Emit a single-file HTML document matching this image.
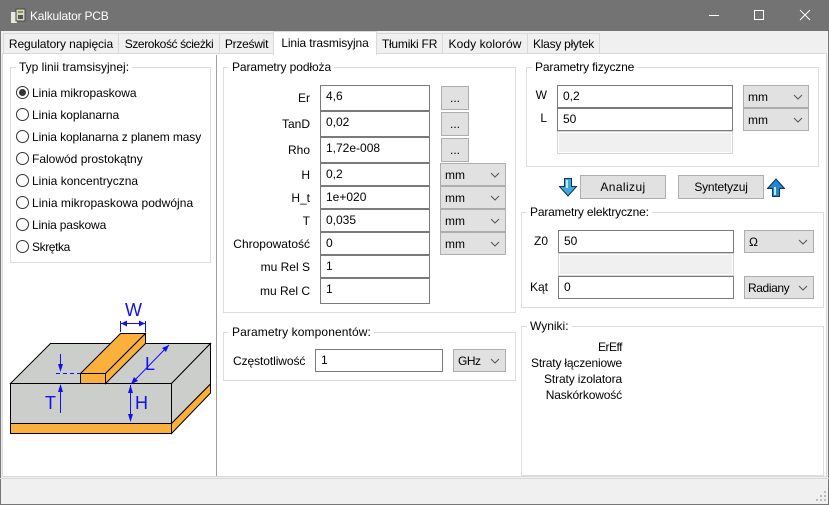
<!DOCTYPE html>
<html><head><meta charset="utf-8"><style>
html,body{margin:0;padding:0}
body{width:829px;height:505px;overflow:hidden;position:relative;background:#fff;font:12px/16px "Liberation Sans",sans-serif;color:#000}
div,span.a{position:absolute;box-sizing:border-box;white-space:nowrap}
.tab{top:33px;height:21px;background:#f0f0f0;border:1px solid #d9d9d9;text-align:center;line-height:21px}
.g{border:1px solid #dcdcdc}
.lg{background:#fff;padding:0 3px;line-height:14px;height:14px}
.i{border:1px solid #7a7a7a;background:#fff;padding-left:5px;line-height:21px}
.d{border:1px solid #d4d4d4;background:#f0f0f0;outline:1px solid #fff;outline-offset:-2px}
.b{background:#e1e1e1;border:1px solid #adadad;text-align:center;line-height:23px}
.s{background:#e1e1e1;border:1px solid #adadad;padding-left:4px;line-height:22px}
.s svg{position:absolute;right:5px;top:8px}
.r{text-align:right;line-height:16px;height:16px}
.c{width:13px;height:13px;border:1px solid #333;border-radius:50%;left:16px;background:#fff}
.t{left:32px;height:16px}
</style></head><body>
<!-- window -->
<div style="left:0;top:0;width:829px;height:505px;background:#f0f0f0;border:1px solid #777;border-top:0"></div>
<div style="left:0;top:0;width:829px;height:31px;background:#737373"></div>
<svg style="position:absolute;left:10px;top:8px" width="16" height="16"><path d="M1 4h6v11H1z" fill="#e8e8e0"/><path d="M6 1h9v12H6z" fill="#d8d8c8" stroke="#444"/><path d="M8 3h5v2H8z" fill="#8a9a40"/><path d="M8 7h5v4H8z" fill="#555"/></svg>
<div style="left:30px;top:8px;color:#fff;line-height:16px;letter-spacing:-.2px">Kalkulator PCB</div>
<svg style="position:absolute;left:700px;top:5px" width="120" height="20"><path d="M9 10.500h10" stroke="#fff" fill="none"/><path d="M54.500 5.500h9v9h-9z" stroke="#fff" fill="none"/><path d="M100 5l10 10M110 5l-10 10" stroke="#fff" fill="none"/></svg>
<!-- pane -->
<div style="left:2px;top:53px;width:825px;height:424px;background:#fff;border:1px solid #d9d9d9"></div>
<div class="tab" style="left:3px;width:116px;letter-spacing:-.1px">Regulatory napięcia</div>
<div class="tab" style="left:118px;width:102px;letter-spacing:-.4px">Szerokość ścieżki</div>
<div class="tab" style="left:219px;width:55px;letter-spacing:-.25px">Prześwit</div>
<div class="tab" style="left:376px;width:67px;letter-spacing:-.2px">Tłumiki FR</div>
<div class="tab" style="left:442px;width:86px;letter-spacing:.08px">Kody kolorów</div>
<div class="tab" style="left:527px;width:73px;letter-spacing:-.25px">Klasy płytek</div>
<div class="tab" style="left:273px;top:31px;width:104px;height:24px;background:#fff;border-bottom:0;line-height:22px;letter-spacing:-.12px">Linia trasmisyjna</div>
<div style="left:216px;top:55px;width:1px;height:421px;background:#a0a0a0"></div>
<div style="left:0;top:478px;width:829px;height:27px;border-top:1px solid #d9d9d9"></div>
<svg style="position:absolute;left:816px;top:491px" width="11" height="11" fill="#bbb"><path d="M8 0h2v2H8zM4 4h2v2H4zM8 4h2v2H8zM0 8h2v2H0zM4 8h2v2H4zM8 8h2v2H8z"/></svg>

<!-- Typ linii -->
<div class="g" style="left:10px;top:67px;width:201px;height:196px"></div>
<div class="lg" style="left:16px;top:60px">Typ linii tramsisyjnej:</div>
<div class="c" style="top:86px"></div><div style="left:19px;top:89px;width:7px;height:7px;border-radius:50%;background:#333"></div>
<div class="c" style="top:108px"></div><div class="c" style="top:130px"></div><div class="c" style="top:152px"></div><div class="c" style="top:174px"></div><div class="c" style="top:196px"></div><div class="c" style="top:218px"></div><div class="c" style="top:240px"></div>
<div class="t" style="top:85px;letter-spacing:-.05px">Linia mikropaskowa</div>
<div class="t" style="top:107px;letter-spacing:-.06px">Linia koplanarna</div>
<div class="t" style="top:129px;letter-spacing:-.1px">Linia koplanarna z planem masy</div>
<div class="t" style="top:151px">Falowód prostokątny</div>
<div class="t" style="top:173px">Linia koncentryczna</div>
<div class="t" style="top:195px;letter-spacing:.04px">Linia mikropaskowa podwójna</div>
<div class="t" style="top:217px;letter-spacing:-.15px">Linia paskowa</div>
<div class="t" style="top:239px;letter-spacing:-.4px">Skrętka</div>

<!-- diagram -->
<svg style="position:absolute;left:0;top:270px" width="216" height="205" viewBox="0 270 216 205">
<g stroke="#000" stroke-width="1">
<path d="M10.500 383.500L50.500 343.500H210.500L171.500 383.500Z" fill="#cccecc"/>
<path d="M171.500 383.500L210.500 343.500V384L171.500 423.500Z" fill="#cccecc"/>
<path d="M171.500 423.500L210.500 384V393L171.500 433.500Z" fill="#fbb03b"/>
<path d="M10.500 383.500H171.500V423.500H10.500Z" fill="#cccecc"/>
<path d="M10.500 423.500H171.500V433.500H10.500Z" fill="#fbb03b"/>
<path d="M80.500 373.500L120.500 333.500H145.500L105.500 373.500Z" fill="#fbb03b"/>
<path d="M105.500 373.500L145.500 333.500V343.500L105.500 383.500Z" fill="#fbb03b"/>
<path d="M80.500 373.500H105.500V383.500H80.500Z" fill="#fbb03b"/>
</g>
<g stroke="#1010f0" fill="none">
<path d="M120.500 321v11M145.500 321v11M121 323.500h24" stroke-dasharray="none"/>
<path d="M60.500 354v16M60.500 385v28M130.500 385v36M131 384L169 345" />
<path d="M56 373.500h24" stroke-dasharray="4 3"/>
</g>
<g fill="#1010f0">
<path d="M121 323.500l6-3v6zM145 323.500l-6-3v6zM60.500 372l-2.500-8h5zM60.500 384l-2.500 8h5zM130.500 385l-2.500 8h5zM130.500 422l-2.500-8h5zM131 384l3-7 4 4zM169 345l-3 7-4-4z"/>
<text x="125" y="316" font-family="Liberation Sans" font-size="18">W</text>
<text x="45" y="409" font-family="Liberation Sans" font-size="18">T</text>
<text x="135" y="409" font-family="Liberation Sans" font-size="18">H</text>
<text x="145" y="370" font-family="Liberation Sans" font-size="18">L</text>
</g></svg>

<!-- Parametry podłoża -->
<div class="g" style="left:223px;top:67px;width:293px;height:246px"></div>
<div class="lg" style="left:229px;top:60px;letter-spacing:-.1px">Parametry podłoża</div>
<div class="r" style="left:230px;width:80px;top:90px">Er</div>
<div class="r" style="left:230px;width:80px;top:116px">TanD</div>
<div class="r" style="left:230px;width:80px;top:142px">Rho</div>
<div class="r" style="left:230px;width:80px;top:167px">H</div>
<div class="r" style="left:230px;width:80px;top:190px">H_t</div>
<div class="r" style="left:230px;width:80px;top:213px">T</div>
<div class="r" style="left:230px;width:80px;top:236px">Chropowatość</div>
<div class="r" style="left:230px;width:80px;top:259px">mu Rel S</div>
<div class="r" style="left:230px;width:80px;top:283px">mu Rel C</div>
<div class="i" style="left:320px;top:85px;width:110px;height:26px">4,6</div>
<div class="i" style="left:320px;top:111px;width:110px;height:26px">0,02</div>
<div class="i" style="left:320px;top:137px;width:110px;height:26px">1,72e-008</div>
<div class="i" style="left:320px;top:163px;width:110px;height:23px">0,2</div>
<div class="i" style="left:320px;top:186px;width:110px;height:23px">1e+020</div>
<div class="i" style="left:320px;top:209px;width:110px;height:23px">0,035</div>
<div class="i" style="left:320px;top:232px;width:110px;height:23px">0</div>
<div class="i" style="left:320px;top:255px;width:110px;height:23px">1</div>
<div class="i" style="left:320px;top:278px;width:110px;height:26px">1</div>
<div class="b" style="left:441px;top:86px;width:28px;height:24px">...</div>
<div class="b" style="left:441px;top:112px;width:28px;height:24px">...</div>
<div class="b" style="left:441px;top:138px;width:28px;height:24px">...</div>
<div class="s" style="left:440px;top:163px;width:66px;height:23px">mm<svg width="10" height="6"><path d="M1 1l4 4 4-4" stroke="#555" fill="none"/></svg></div>
<div class="s" style="left:440px;top:186px;width:66px;height:23px">mm<svg width="10" height="6"><path d="M1 1l4 4 4-4" stroke="#555" fill="none"/></svg></div>
<div class="s" style="left:440px;top:209px;width:66px;height:23px">mm<svg width="10" height="6"><path d="M1 1l4 4 4-4" stroke="#555" fill="none"/></svg></div>
<div class="s" style="left:440px;top:232px;width:66px;height:23px">mm<svg width="10" height="6"><path d="M1 1l4 4 4-4" stroke="#555" fill="none"/></svg></div>

<!-- komponenty -->
<div class="g" style="left:223px;top:332px;width:293px;height:49px"></div>
<div class="lg" style="left:229px;top:325px;letter-spacing:.1px">Parametry komponentów:</div>
<div style="left:233px;top:353px;letter-spacing:-.08px">Częstotliwość</div>
<div class="i" style="left:315px;top:349px;width:128px;height:23px">1</div>
<div class="s" style="left:453px;top:349px;width:53px;height:23px;letter-spacing:-.5px">GHz<svg width="10" height="6"><path d="M1 1l4 4 4-4" stroke="#555" fill="none"/></svg></div>

<!-- fizyczne -->
<div class="g" style="left:526px;top:67px;width:293px;height:100px"></div>
<div class="lg" style="left:532px;top:60px;letter-spacing:-.16px">Parametry fizyczne</div>
<div class="r" style="left:526px;width:21px;top:87px">W</div>
<div class="r" style="left:526px;width:21px;top:110px">L</div>
<div class="i" style="left:557px;top:85px;width:176px;height:23px">0,2</div>
<div class="i" style="left:557px;top:108px;width:176px;height:23px">50</div>
<div class="d" style="left:557px;top:131px;width:176px;height:23px"></div>
<div class="s" style="left:743px;top:85px;width:66px;height:23px">mm<svg width="10" height="6"><path d="M1 1l4 4 4-4" stroke="#555" fill="none"/></svg></div>
<div class="s" style="left:743px;top:108px;width:66px;height:23px">mm<svg width="10" height="6"><path d="M1 1l4 4 4-4" stroke="#555" fill="none"/></svg></div>

<!-- buttons -->
<svg style="position:absolute;left:559px;top:178px" width="18" height="19"><path d="M5.500.5h7v8h5L9 18 .5 8.500h5z" fill="#3fa9dc" stroke="#135"/><path d="M7 2h2v8H7z" fill="#bfe8f8"/></svg>
<div class="b" style="left:580px;top:175px;width:86px;height:24px;line-height:22px;letter-spacing:.4px">Analizuj</div>
<div class="b" style="left:678px;top:175px;width:86px;height:24px;line-height:22px;letter-spacing:-.2px">Syntetyzuj</div>
<svg style="position:absolute;left:767px;top:178px" width="18" height="19"><path d="M5.500 18.500h7v-8h5L9 1 .5 10.500h5z" fill="#1e88d0" stroke="#135"/><path d="M7 9h2v8H7z" fill="#bfe8f8"/></svg>

<!-- elektryczne -->
<div class="g" style="left:521px;top:212px;width:303px;height:96px"></div>
<div class="lg" style="left:527px;top:205px;letter-spacing:-.18px">Parametry elektryczne:</div>
<div class="r" style="left:521px;width:27px;top:233px">Z0</div>
<div class="r" style="left:521px;width:27px;top:279px">Kąt</div>
<div class="i" style="left:558px;top:230px;width:176px;height:23px">50</div>
<div class="d" style="left:558px;top:253px;width:176px;height:23px"></div>
<div class="i" style="left:558px;top:276px;width:176px;height:23px">0</div>
<div class="s" style="left:744px;top:230px;width:70px;height:23px">Ω<svg width="10" height="6"><path d="M1 1l4 4 4-4" stroke="#555" fill="none"/></svg></div>
<div class="s" style="left:744px;top:276px;width:70px;height:23px;padding-left:3px;letter-spacing:-.4px">Radiany<svg width="10" height="6"><path d="M1 1l4 4 4-4" stroke="#555" fill="none"/></svg></div>

<!-- wyniki -->
<div class="g" style="left:521px;top:326px;width:303px;height:150px"></div>
<div class="lg" style="left:527px;top:319px">Wyniki:</div>
<div class="r" style="left:522px;width:100px;top:339px;letter-spacing:-.5px">ErEff</div>
<div class="r" style="left:522px;width:100px;top:355px;letter-spacing:-.18px">Straty łączeniowe</div>
<div class="r" style="left:522px;width:100px;top:371px;letter-spacing:-.13px">Straty izolatora</div>
<div class="r" style="left:522px;width:100px;top:387px;letter-spacing:-.15px">Naskórkowość</div>
</body></html>
